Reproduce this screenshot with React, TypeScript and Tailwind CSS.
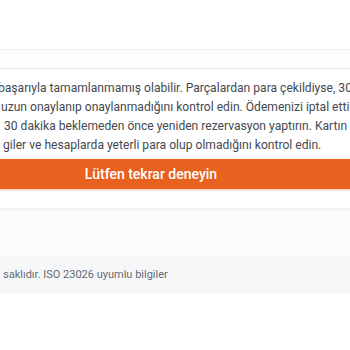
import React from "react";

export default function App() {
  const font = { fontFamily: "Roboto, 'Noto Sans', sans-serif" };
  return (
    <div className="w-[350px] h-[350px] overflow-hidden bg-white flex flex-col" style={font}>
      <div className="h-[49px] bg-white shrink-0" />
      <div className="h-[20px] shrink-0 border-t border-b border-t-[#f4f4f4] border-b-[#ebebeb] bg-[#fdfdfd]" />
      <div className="shrink-0 bg-white pt-[10px] pb-0 shadow-[0_1px_3px_rgba(0,0,0,0.08)] relative">
        <div className="text-[12.1px] leading-[19px] text-[#444951]">
          <div className="whitespace-nowrap -ml-[2px]">başarıyla tamamlanmamış olabilir. Parçalardan para çekildiyse, 30</div>
          <div className="whitespace-nowrap ml-[1px]">uzun onaylanıp onaylanmadığını kontrol edin. Ödemenizi iptal etti</div>
          <div className="whitespace-nowrap ml-[4px]">30 dakika beklemeden önce yeniden rezervasyon yaptırın. Kartın</div>
          <div className="whitespace-nowrap ml-[3px]">giler ve hesaplarda yeterli para olup olmadığını kontrol edin.</div>
        </div>
        <div className="-ml-[70px] -mr-[22px] mt-[4px] h-[30px] bg-[#e8611f] flex items-center justify-center shadow-[0_1px_2px_rgba(232,97,31,0.4)]">
          <span className="text-white text-[14px] font-medium">Lütfen tekrar deneyin</span>
        </div>
        <div className="h-[19px]" />
      </div>
      <div className="h-[49px] shrink-0 bg-[#fbfbfc]" />
      <div className="h-[36px] shrink-0 bg-[#f6f7f9] flex items-center">
        <span className="whitespace-nowrap ml-[3px] text-[11px] text-[#656b75]">saklıdır. ISO 23026 uyumlu bilgiler</span>
      </div>
      <div className="flex-1 bg-white" />
    </div>
  );
}
